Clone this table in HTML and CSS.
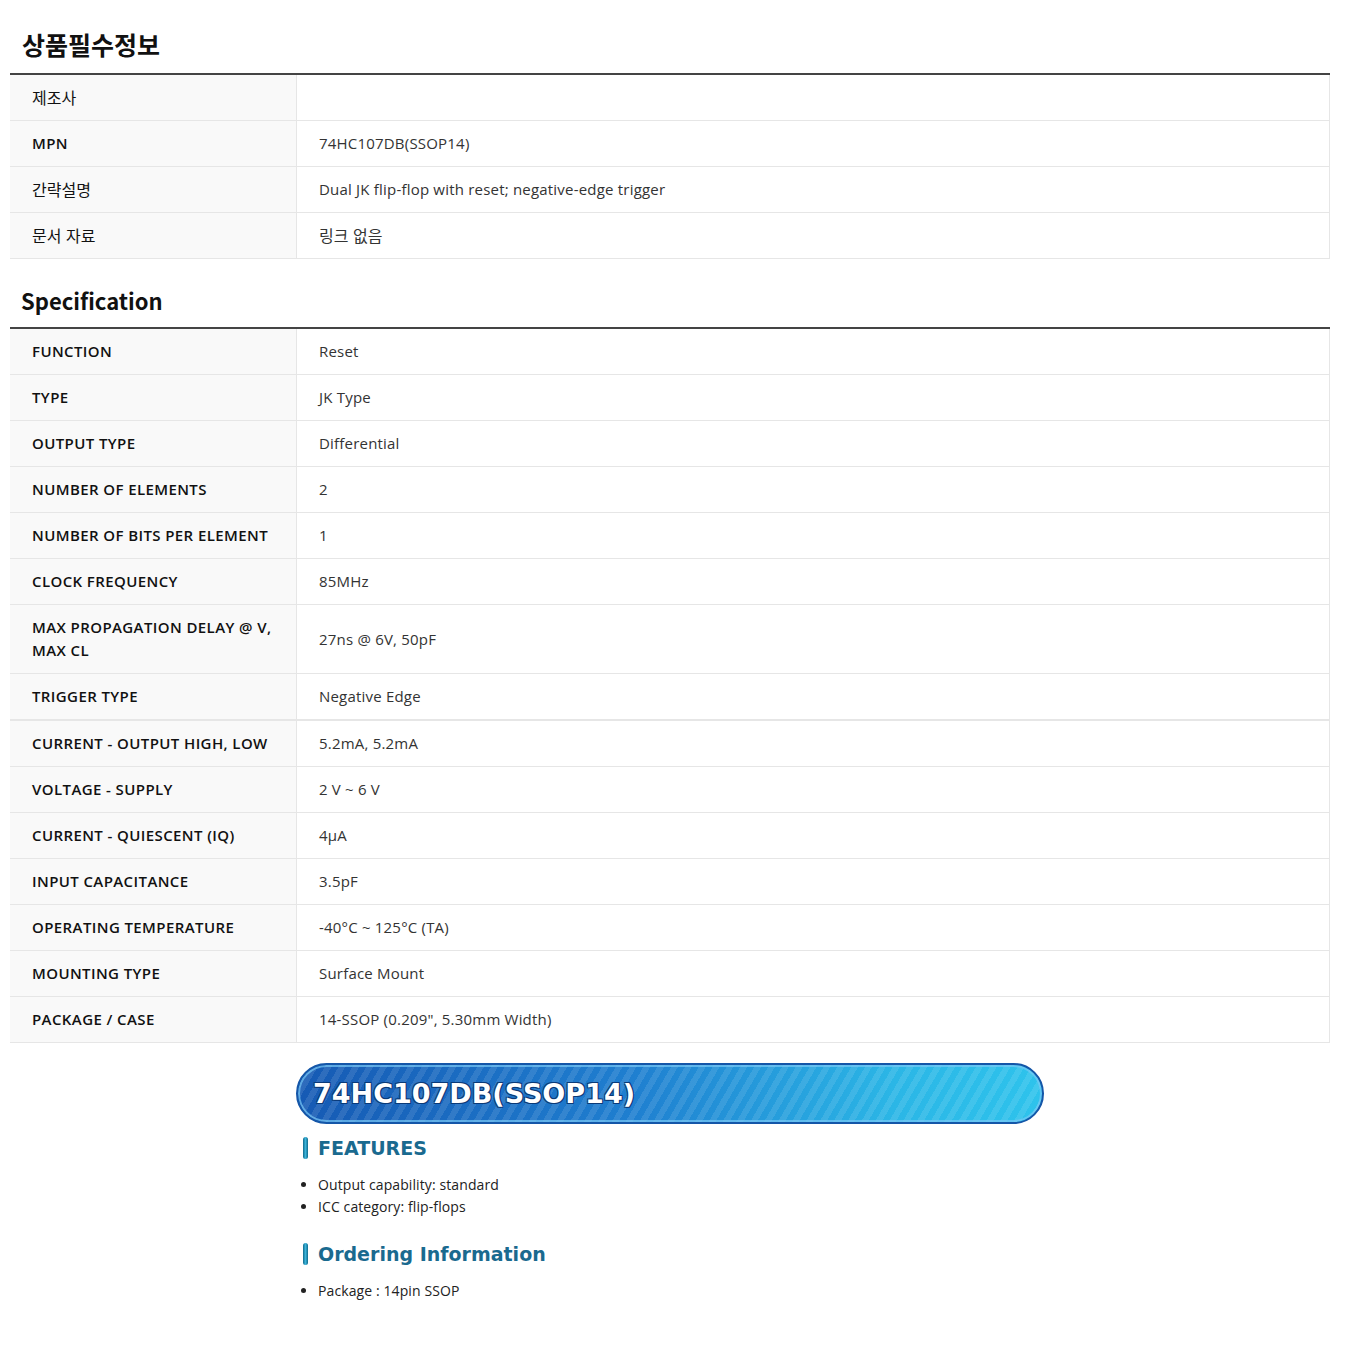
FILE: index.html
```html
<!DOCTYPE html>
<html lang="ko">
<head>
  <meta charset="UTF-8" />
  <title>74HC107DB(SSOP14)</title>
  <link rel="stylesheet" href="styles.css">
</head>
<body>
  <div class="page">

    <!-- 상품필수정보 -->
    <h2 class="section-title">상품필수정보</h2>
    <table class="info-table first">
      <tr><th class="ko">제조사</th><td></td></tr>
      <tr><th>MPN</th><td>74HC107DB(SSOP14)</td></tr>
      <tr><th class="ko">간략설명</th><td>Dual JK flip-flop with reset; negative-edge trigger</td></tr>
      <tr><th class="ko">문서 자료</th><td class="ko">링크 없음</td></tr>
    </table>

    <!-- Specification -->
    <h2 class="section-title en">Specification</h2>
    <table class="info-table">
      <tr><th>FUNCTION</th><td>Reset</td></tr>
      <tr><th>TYPE</th><td>JK Type</td></tr>
      <tr><th>OUTPUT TYPE</th><td>Differential</td></tr>
      <tr><th>NUMBER OF ELEMENTS</th><td>2</td></tr>
      <tr><th>NUMBER OF BITS PER ELEMENT</th><td>1</td></tr>
      <tr><th>CLOCK FREQUENCY</th><td>85MHz</td></tr>
      <tr class="tall"><th>MAX PROPAGATION DELAY @ V, MAX CL</th><td>27ns @ 6V, 50pF</td></tr>
      <tr class="thick"><th>TRIGGER TYPE</th><td>Negative Edge</td></tr>
      <tr><th>CURRENT - OUTPUT HIGH, LOW</th><td>5.2mA, 5.2mA</td></tr>
      <tr><th>VOLTAGE - SUPPLY</th><td>2 V ~ 6 V</td></tr>
      <tr><th>CURRENT - QUIESCENT (IQ)</th><td>4µA</td></tr>
      <tr><th>INPUT CAPACITANCE</th><td>3.5pF</td></tr>
      <tr><th>OPERATING TEMPERATURE</th><td>-40°C ~ 125°C (TA)</td></tr>
      <tr><th>MOUNTING TYPE</th><td>Surface Mount</td></tr>
      <tr><th>PACKAGE / CASE</th><td>14-SSOP (0.209", 5.30mm Width)</td></tr>
    </table>

    <!-- 상세 설명 -->
    <div class="detail">
      <div class="part-banner">74HC107DB(SSOP14)</div>

      <h3 class="detail-head"><span class="pill"></span>FEATURES</h3>
      <ul class="detail-list">
        <li>Output capability: standard</li>
        <li>ICC category: flip-flops</li>
      </ul>

      <h3 class="detail-head"><span class="pill"></span>Ordering Information</h3>
      <ul class="detail-list">
        <li>Package : 14pin SSOP</li>
      </ul>
    </div>

  </div>
</body>
</html>
```

FILE: styles.css
```css
* { margin: 0; padding: 0; box-sizing: border-box; }
body {
  background: #fff;
  color: #222;
  font-family: "Open Sans", "Noto Sans CJK KR", sans-serif;
  font-size: 14px;
}
.page {
  width: 1320px;
  margin-left: 10px;
  padding-top: 28px;
}

.section-title {
  font-family: "Noto Sans CJK KR", sans-serif;
  font-size: 25px;
  font-weight: 700;
  color: #111;
  padding-left: 12px;
  height: 45px;
  line-height: 32px;
}
.section-title.en {
  font-size: 22px;
  padding-left: 11px;
  height: 43px;
}

.info-table {
  width: 100%;
  border-collapse: separate;
  border-spacing: 0;
  border-top: 2px solid #444;
}
.info-table.first { margin-bottom: 25px; }
.info-table th,
.info-table td {
  height: 46px;
  border-bottom: 1px solid #e6e6e6;
  text-align: left;
  vertical-align: middle;
  line-height: 23px;
}
.info-table th {
  width: 287px;
  padding: 0 8px 0 22px;
  background: #f9f9f9;
  border-right: 1px solid #e6e6e6;
  font-size: 15px;
  font-weight: 600;
  letter-spacing: 0.4px;
  color: #111;
}
.info-table td {
  padding: 0 22px;
  border-right: 1px solid #e6e6e6;
  font-size: 15px;
  letter-spacing: 0.2px;
  color: #333;
}
.info-table .ko {
  font-family: "Noto Sans CJK KR", sans-serif;
  font-size: 16px;
  font-weight: 400;
  letter-spacing: 0;
}
.info-table tr.tall th,
.info-table tr.tall td { height: 69px; }
.info-table tr.thick th,
.info-table tr.thick td {
  height: 47px;
  border-bottom-width: 2px;
}

.detail {
  padding: 20px 0 40px 286px;
}
.part-banner {
  width: 748px;
  height: 61px;
  border-radius: 31px;
  border: 2px solid #1456a8;
  box-shadow: inset 0 0 0 2px rgba(120, 200, 245, 0.7);
  background:
    repeating-linear-gradient(120deg, rgba(255,255,255,0.1) 0 6px, rgba(255,255,255,0) 6px 12px),
    linear-gradient(90deg, #165ab4 0%, #1f7fd0 45%, #2bb6e6 80%, #2ec3ec 100%);
  color: #fff;
  font-family: "DejaVu Sans", sans-serif;
  font-weight: 700;
  font-size: 27px;
  line-height: 57px;
  padding-left: 15px;
  text-shadow: 1px 1px 0 #0b3a78, -1px -1px 0 #0b3a78, 1px -1px 0 #0b3a78, -1px 1px 0 #0b3a78;
}

.detail-head {
  display: flex;
  align-items: center;
  gap: 10px;
  margin: 13px 0 15px 7px;
  font-family: "DejaVu Sans", sans-serif;
  font-weight: 700;
  font-size: 19px;
  color: #1a6a8f;
}
.pill {
  width: 5px;
  height: 22px;
  border-radius: 3px;
  background: linear-gradient(90deg, #0f6a8c, #3bb3d9 50%, #0f6a8c);
}
.detail-list {
  margin-left: 22px;
  margin-bottom: 25px;
  color: #222;
}
.detail-list li {
  line-height: 22px;
  list-style: disc outside;
  letter-spacing: 0.1px;
}
```
